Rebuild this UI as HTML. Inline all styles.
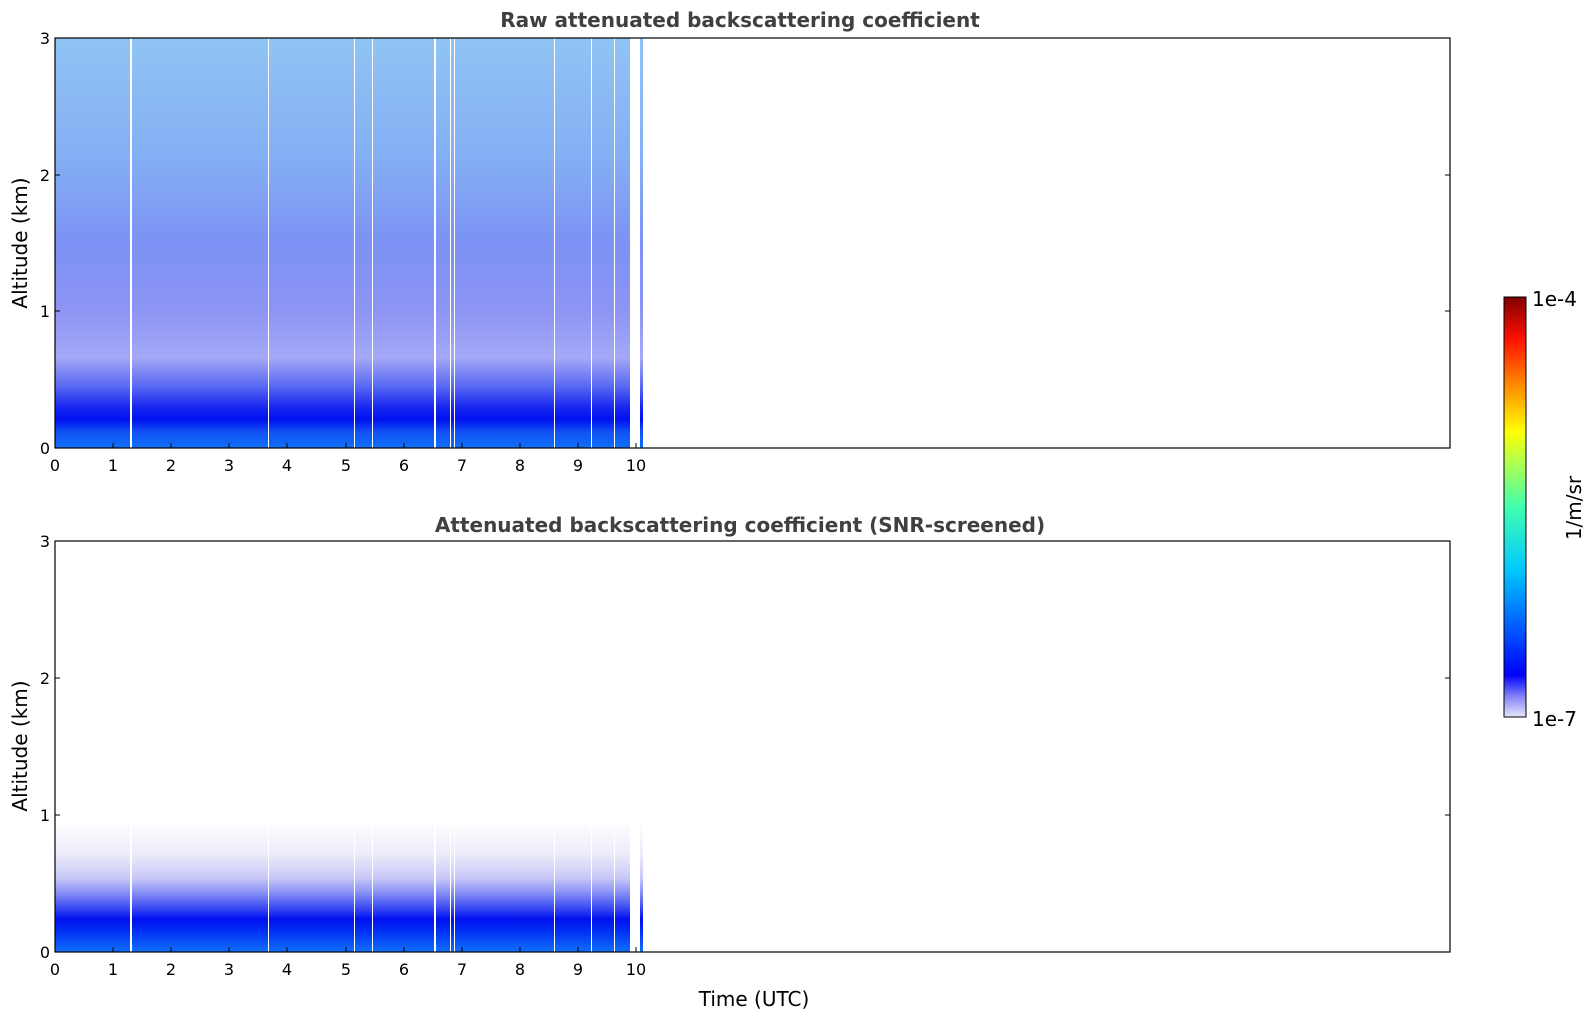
<!DOCTYPE html>
<html><head><meta charset="utf-8"><style>
html,body{margin:0;padding:0;background:#fff;width:1595px;height:1020px;overflow:hidden}
svg{display:block;font-family:"DejaVu Sans","Liberation Sans",sans-serif}
</style></head><body>
<svg width="1595" height="1020" viewBox="0 0 1595 1020" xmlns="http://www.w3.org/2000/svg">
<defs>
<linearGradient id="g1" x1="0" y1="0" x2="0" y2="1">
<stop offset="0" stop-color="#90c4f4"/>
<stop offset="0.3" stop-color="#84aef4"/>
<stop offset="0.5" stop-color="#7c92f4"/>
<stop offset="0.66" stop-color="#8c94f4"/>
<stop offset="0.78" stop-color="#a4a8f6"/>
<stop offset="0.85" stop-color="#5868f2"/>
<stop offset="0.9" stop-color="#1828f0"/>
<stop offset="0.93" stop-color="#0010f0"/>
<stop offset="0.96" stop-color="#1050f4"/>
<stop offset="1" stop-color="#1070f8"/>
</linearGradient>
<linearGradient id="g2" x1="0" y1="0" x2="0" y2="1">
<stop offset="0" stop-color="#ffffff"/>
<stop offset="0.68" stop-color="#ffffff"/>
<stop offset="0.76" stop-color="#ececfa"/>
<stop offset="0.82" stop-color="#c8c8f8"/>
<stop offset="0.86" stop-color="#8088f6"/>
<stop offset="0.89" stop-color="#4050f2"/>
<stop offset="0.92" stop-color="#0010f0"/>
<stop offset="0.95" stop-color="#0030f4"/>
<stop offset="1" stop-color="#1070fa"/>
</linearGradient>
<linearGradient id="cb" x1="0" y1="1" x2="0" y2="0">
<stop offset="0" stop-color="#e6e6fa"/>
<stop offset="0.05" stop-color="#8080f8"/>
<stop offset="0.1" stop-color="#0000ff"/>
<stop offset="0.35" stop-color="#00c8ff"/>
<stop offset="0.5" stop-color="#40ffb0"/>
<stop offset="0.62" stop-color="#c0ff40"/>
<stop offset="0.68" stop-color="#ffff00"/>
<stop offset="0.8" stop-color="#ff8000"/>
<stop offset="0.9" stop-color="#ff1000"/>
<stop offset="1" stop-color="#800000"/>
</linearGradient>
</defs>

<text x="740" y="27" text-anchor="middle" font-size="20" font-weight="bold" fill="#404040">Raw attenuated backscattering coefficient</text>
<text x="740" y="532" text-anchor="middle" font-size="20" font-weight="bold" fill="#404040">Attenuated backscattering coefficient (SNR-screened)</text>

<rect x="55" y="38" width="575" height="410" fill="url(#g1)"/>
<rect x="640" y="38" width="3" height="410" fill="url(#g1)"/>

<rect x="55" y="541" width="575" height="411" fill="url(#g2)"/>
<rect x="640" y="541" width="3" height="411" fill="url(#g2)"/>

<g fill="#fff">
<rect x="130" y="38" width="2" height="410"/><rect x="268" y="38" width="1" height="410"/>
<rect x="354" y="38" width="1" height="410"/><rect x="372" y="38" width="1" height="410"/>
<rect x="434" y="38" width="2" height="410"/><rect x="450" y="38" width="1" height="410"/>
<rect x="454" y="38" width="1" height="410"/><rect x="554" y="38" width="1" height="410"/>
<rect x="591" y="38" width="1" height="410"/><rect x="614" y="38" width="1" height="410"/>
<rect x="130" y="800" width="2" height="152"/><rect x="268" y="800" width="1" height="152"/>
<rect x="354" y="800" width="1" height="152"/><rect x="372" y="800" width="1" height="152"/>
<rect x="434" y="800" width="2" height="152"/><rect x="450" y="800" width="1" height="152"/>
<rect x="454" y="800" width="1" height="152"/><rect x="554" y="800" width="1" height="152"/>
<rect x="591" y="800" width="1" height="152"/><rect x="614" y="800" width="1" height="152"/>
</g>

<rect x="55" y="38" width="1395" height="410" fill="none" stroke="#000" stroke-width="1.2"/>
<rect x="55" y="541" width="1395" height="411" fill="none" stroke="#000" stroke-width="1.2"/>

<g stroke="#000" stroke-width="1">
<path d="M55 448v-5M113 448v-5M171 448v-5M229 448v-5M287 448v-5M346 448v-5M404 448v-5M462 448v-5M520 448v-5M578 448v-5M636 448v-5"/>
<path d="M55 952v-5M113 952v-5M171 952v-5M229 952v-5M287 952v-5M346 952v-5M404 952v-5M462 952v-5M520 952v-5M578 952v-5M636 952v-5"/>
<path d="M55 448h5M55 311h5M55 175h5M55 38h5M1450 448h-5M1450 311h-5M1450 175h-5M1450 38h-5"/>
<path d="M55 952h5M55 815h5M55 678h5M55 541h5M1450 952h-5M1450 815h-5M1450 678h-5M1450 541h-5"/>
</g>

<g font-size="16" fill="#000" text-anchor="middle">
<text x="55" y="471">0</text><text x="113" y="471">1</text><text x="171" y="471">2</text><text x="229" y="471">3</text><text x="287" y="471">4</text><text x="346" y="471">5</text><text x="404" y="471">6</text><text x="462" y="471">7</text><text x="520" y="471">8</text><text x="578" y="471">9</text><text x="636" y="471">10</text>
<text x="55" y="975">0</text><text x="113" y="975">1</text><text x="171" y="975">2</text><text x="229" y="975">3</text><text x="287" y="975">4</text><text x="346" y="975">5</text><text x="404" y="975">6</text><text x="462" y="975">7</text><text x="520" y="975">8</text><text x="578" y="975">9</text><text x="636" y="975">10</text>
</g>
<g font-size="16" fill="#000" text-anchor="end">
<text x="50" y="454">0</text><text x="50" y="317">1</text><text x="50" y="181">2</text><text x="50" y="44">3</text>
<text x="50" y="958">0</text><text x="50" y="821">1</text><text x="50" y="684">2</text><text x="50" y="547">3</text>
</g>

<text x="27" y="243" font-size="20" text-anchor="middle" transform="rotate(-90 27 243)">Altitude (km)</text>
<text x="27" y="746" font-size="20" text-anchor="middle" transform="rotate(-90 27 746)">Altitude (km)</text>
<text x="754" y="1006" font-size="20" text-anchor="middle">Time (UTC)</text>

<rect x="1504" y="297" width="22" height="420" fill="url(#cb)" stroke="#000" stroke-width="1"/>
<text x="1532" y="306" font-size="20">1e-4</text>
<text x="1532" y="726" font-size="20">1e-7</text>
<text x="1581" y="508" font-size="20" text-anchor="middle" transform="rotate(-90 1581 508)">1/m/sr</text>
</svg>
</body></html>
